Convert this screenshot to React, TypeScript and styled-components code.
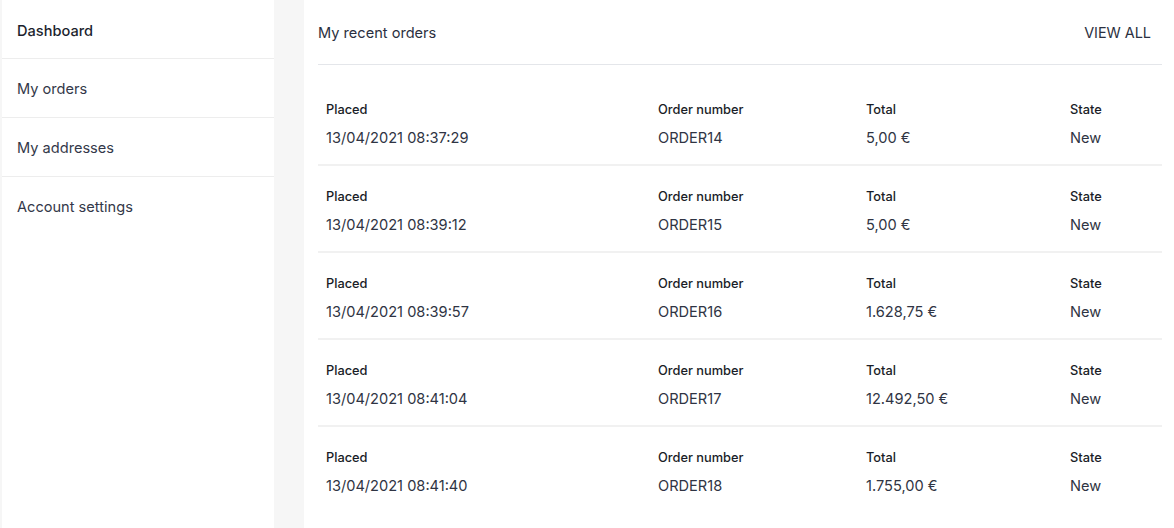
import React from "react";
import styled, { createGlobalStyle } from "styled-components";

const Global = createGlobalStyle`
  html, body { margin: 0; padding: 0; background: #f6f6f6; }
  body { font-family: Inter, "Noto Sans", Arial, sans-serif; color: #1f2430; }
  * { box-sizing: border-box; }
`;

const Layout = styled.div`
  display: flex;
  gap: 30px;
  min-height: 528px;
  padding-left: 2px;
`;

const Sidebar = styled.nav`
  width: 272px;
  flex-shrink: 0;
  background: #fff;
  display: flex;
  flex-direction: column;
`;

const NavItem = styled.a<{ $active?: boolean }>`
  display: flex;
  align-items: center;
  height: 59px;
  padding: ${(p) => (p.$active ? "3px 15px 0" : "1px 15px 0")};
  font-size: 14.6px;
  font-weight: ${(p) => (p.$active ? 500 : 400)};
  color: ${(p) => (p.$active ? "#1c1f2e" : "#333849")};
  border-bottom: 1px solid #ededed;
  text-decoration: none;
  &:last-child { border-bottom: none; }
`;

const Main = styled.main`
  flex: 1;
  background: #fff;
  padding: 0 12px 0 14px;
`;

const Header = styled.div`
  display: flex;
  justify-content: space-between;
  align-items: center;
  height: 65px;
  padding-top: 1px;
  border-bottom: 1px solid #e4e6ea;
  font-size: 14.6px;
  color: #2b3040;
`;

const ViewAll = styled.a`
  text-transform: uppercase;
  padding-right: 11px;
  color: #2b3040;
  font-size: 14.4px;
`;

const List = styled.div`
  margin-top: 14px;
`;

const Row = styled.div`
  display: grid;
  grid-template-columns: 332px 208px 204px 1fr;
  padding: 21px 8px 16px;
  border-bottom: 2px solid #f1f1f1;
  &:last-child { border-bottom: none; }
`;

const Cell = styled.div`
  display: flex;
  flex-direction: column;
  gap: 8px;
`;

const Label = styled.div`
  font-size: 12.8px;
  font-weight: 500;
  line-height: 20px;
  color: #1a1d27;
`;

const Value = styled.div`
  font-size: 14.6px;
  line-height: 20px;
  color: #2f3443;
`;

const orders = [
  { placed: "13/04/2021 08:37:29", number: "ORDER14", total: "5,00 €", state: "New" },
  { placed: "13/04/2021 08:39:12", number: "ORDER15", total: "5,00 €", state: "New" },
  { placed: "13/04/2021 08:39:57", number: "ORDER16", total: "1.628,75 €", state: "New" },
  { placed: "13/04/2021 08:41:04", number: "ORDER17", total: "12.492,50 €", state: "New" },
  { placed: "13/04/2021 08:41:40", number: "ORDER18", total: "1.755,00 €", state: "New" },
];

export default function App() {
  return (
    <>
      <Global />
      <Layout>
        <Sidebar>
          <NavItem $active>Dashboard</NavItem>
          <NavItem>My orders</NavItem>
          <NavItem>My addresses</NavItem>
          <NavItem>Account settings</NavItem>
        </Sidebar>
        <Main>
          <Header>
            <span>My recent orders</span>
            <ViewAll>View all</ViewAll>
          </Header>
          <List>
            {orders.map((o) => (
              <Row key={o.number}>
                <Cell>
                  <Label>Placed</Label>
                  <Value>{o.placed}</Value>
                </Cell>
                <Cell>
                  <Label>Order number</Label>
                  <Value>{o.number}</Value>
                </Cell>
                <Cell>
                  <Label>Total</Label>
                  <Value>{o.total}</Value>
                </Cell>
                <Cell>
                  <Label>State</Label>
                  <Value>{o.state}</Value>
                </Cell>
              </Row>
            ))}
          </List>
        </Main>
      </Layout>
    </>
  );
}
